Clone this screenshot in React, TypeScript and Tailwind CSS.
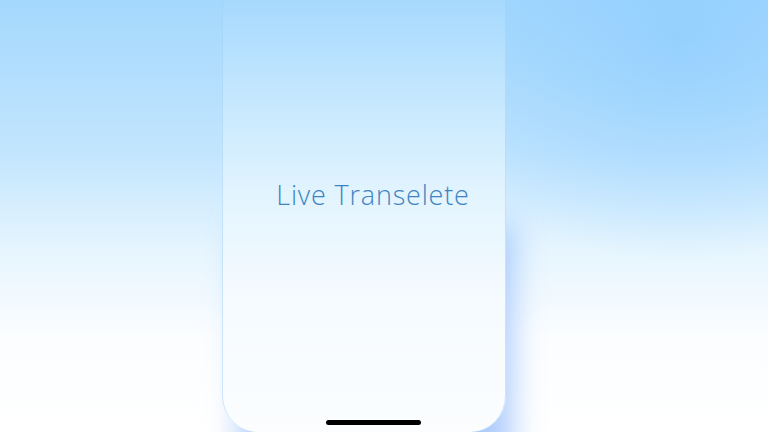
import React from "react";

export default function App() {
  return (
    <div className="relative w-[768px] h-[432px] overflow-hidden bg-[linear-gradient(180deg,#a4d8fd_0%,#c2e5fe_35%,#e6f5fe_58%,#fbfdff_78%,#ffffff_100%)]">
      <div className="absolute inset-0 bg-[radial-gradient(ellipse_280px_220px_at_680px_40px,rgba(140,204,254,0.7),rgba(140,204,254,0)_100%)]" />
      <div className="relative flex h-full pl-[222px]">
        <div className="relative flex flex-col w-[284px] h-[432px] rounded-b-[36px] border-l border-r border-[#9fcdf2]/50 bg-[linear-gradient(180deg,#a6d9fe_0%,#c4e7fe_22%,#e2f4fe_45%,#f3faff_65%,#f9fcff_85%,#fbfdff_100%)] shadow-[12px_220px_30px_-6px_rgba(120,170,250,0.6)]">
          <div className="flex h-[196px] items-end justify-center pl-[18px]">
            <span
              className="text-[27px] leading-none tracking-[0.8px] text-[#3f84c2] translate-y-[12px]"
              style={{ fontFamily: "'Open Sans', sans-serif", fontWeight: 300 }}
            >
              Live Transelete
            </span>
          </div>
          <div className="flex-1" />
          <div className="flex justify-center pb-[7px] pl-[19px]">
            <div className="w-[95px] h-[5px] rounded-full bg-black" />
          </div>
        </div>
      </div>
    </div>
  );
}
